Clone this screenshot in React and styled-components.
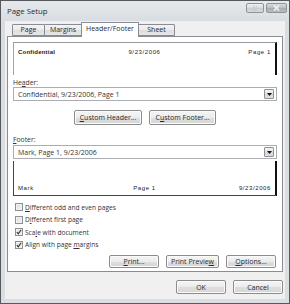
import React from 'react'
import styled, { createGlobalStyle } from 'styled-components'

const GlobalStyle = createGlobalStyle`
  html,
  body {
    margin: 0;
    padding: 0;
    background: #fff;
  }
  body {
    font-family: 'Open Sans', 'Noto Sans', 'Liberation Sans', sans-serif;
    font-size: 7px;
    color: #333;
  }
  * {
    box-sizing: border-box;
  }
`

const Window = styled.div`
  width: 290px;
  height: 304px;
  border: 1px solid #55585d;
  background: linear-gradient(#e6e9ec, #d9dde1 20px, #dadde1);
  display: flex;
  flex-direction: column;
  overflow: hidden;
`

const TitleBar = styled.div`
  height: 20px;
  flex: none;
  display: flex;
  justify-content: space-between;
  padding: 0 2px 0 6px;
`

const Title = styled.span`
  font-size: 7.8px;
  line-height: 10px;
  margin-top: 5px;
  color: #2b2b2b;
`

const Caption = styled.div`
  display: flex;
  gap: 2px;
  margin-top: 2px;
`

const CaptionButton = styled.div`
  width: ${props => props.w}px;
  height: 10px;
  border: 1px solid #8f9398;
  border-radius: 2px;
  background: ${props =>
    props.dark
      ? 'linear-gradient(#d9dcdf, #b9bdc2 50%, #a9adb3 51%, #b8bcc1)'
      : 'linear-gradient(#eef0f2, #d8dbde 50%, #cacdd2 51%, #d6d9dc)'};
  display: flex;
  align-items: center;
  justify-content: center;
  font-size: 7px;
  font-weight: bold;
  line-height: 1;
  color: #f4f4f4;
  text-shadow: 0 0 1px #555;
`

const Client = styled.div`
  flex: 1;
  margin: 0 4px 4px;
  padding: 0 2px;
  background: #f0f0f0;
  display: flex;
  flex-direction: column;
`

const TabStrip = styled.div`
  height: 15px;
  flex: none;
  display: flex;
  align-items: flex-end;
  padding-left: 5px;
`

const Tab = styled.div`
  width: ${props => props.w}px;
  height: ${props => (props.active ? 15 : 12)}px;
  margin-right: -1px;
  margin-bottom: ${props => (props.active ? -1 : 0)}px;
  position: relative;
  z-index: ${props => (props.active ? 1 : 0)};
  border: 1px solid #898c95;
  border-bottom: ${props => (props.active ? 'none' : '1px solid #898c95')};
  border-radius: 1px 1px 0 0;
  background: ${props =>
    props.active ? '#fff' : 'linear-gradient(#f3f3f3, #ebebeb 50%, #dedede 51%, #e6e6e6)'};
  font-size: 7px;
  line-height: ${props => (props.active ? 12 : 10)}px;
  text-align: center;
  color: #2a2a2a;
`

const Panel = styled.div`
  height: 236px;
  flex: none;
  border: 1px solid #898c95;
  background: #fff;
  padding: 5px 5px 0;
  display: flex;
  flex-direction: column;
`

const Preview = styled.div`
  height: ${props => props.h}px;
  flex: none;
  display: flex;
  justify-content: space-between;
  align-items: ${props => (props.footer ? 'flex-end' : 'flex-start')};
  padding: ${props => (props.footer ? '0 4px 3px 4px' : '6px 4px 0 4px')};
  border-left: 1px solid ${props => (props.footer ? '#444' : '#a3a3a3')};
  border-right: 2px solid #111;
  border-top: ${props => (props.footer ? 'none' : '1px solid #9a9a9a')};
  border-bottom: ${props => (props.footer ? '1px solid #444' : 'none')};
  margin-top: ${props => props.mt || 0}px;
  font-family: 'Liberation Sans', Arial, sans-serif;
  font-size: 6px;
  line-height: 7px;
  color: #222;
`

const PreviewText = styled.span`
  flex: 1;
  text-align: ${props => props.align};
  font-weight: ${props => (props.bold ? 'bold' : 'normal')};
  letter-spacing: ${props => (props.bold ? 0.2 : 0.6)}px;
`

const Label = styled.div`
  margin-top: ${props => props.mt}px;
  height: ${props => props.h}px;
  font-size: 6.8px;
  line-height: 9px;
`

const Select = styled.div`
  height: 14px;
  flex: none;
  border: 1px solid #abadb3;
  background: #fff;
  display: flex;
  align-items: center;
  justify-content: space-between;
  padding: 0 1px 0 4px;
  font-size: 7px;
`

const Arrow = styled.div`
  width: 10px;
  height: 10px;
  margin-right: 1px;
  border: 1px solid #8f9094;
  border-radius: 1px;
  background: linear-gradient(#f4f4f4, #e3e3e3 50%, #d6d6d6 51%, #e0e0e0);
  display: flex;
  align-items: center;
  justify-content: center;
`

const ButtonRow = styled.div`
  display: flex;
  gap: 7px;
  justify-content: ${props => props.justify || 'flex-end'};
  margin-top: ${props => props.mt}px;
  padding-right: ${props => props.pr || 0}px;
  flex: none;
`

const Button = styled.div`
  width: ${props => props.w}px;
  height: ${props => props.h || 14}px;
  border: 1px solid #8c8c8c;
  border-radius: 2px;
  background: linear-gradient(#f5f5f5, #ececec 50%, #dedede 51%, #d6d6d6);
  box-shadow: inset 0 0 0 1px #fbfbfb;
  display: flex;
  align-items: center;
  justify-content: center;
  font-size: 7px;
  color: #2a2a2a;
  white-space: nowrap;
`

const Checks = styled.div`
  margin-top: 5px;
  display: flex;
  flex-direction: column;
`

const CheckRow = styled.div`
  height: 12.5px;
  display: flex;
  align-items: center;
  padding-left: 2px;
  gap: 2px;
  font-size: 6.6px;
`

const Box = styled.div`
  width: 8px;
  height: 8px;
  flex: none;
  border: 1px solid #8e8f8f;
  background: linear-gradient(135deg, #dcdcdc, #f6f6f6);
  box-shadow: inset 0 0 0 1px #f2f2f2;
  display: flex;
  align-items: center;
  justify-content: center;
`

const Check = ({ checked, children }) => (
  <CheckRow>
    <Box>
      {checked && (
        <svg width="6" height="6" viewBox="0 0 6 6">
          <path d="M0.8 3.2 L2.3 4.8 L5.2 0.8" fill="none" stroke="#333" strokeWidth="1.1" />
        </svg>
      )}
    </Box>
    <span>{children}</span>
  </CheckRow>
)

const DownArrow = () => (
  <Arrow>
    <svg width="5" height="3" viewBox="0 0 5 3">
      <path d="M0 0 L5 0 L2.5 3 Z" fill="#111" />
    </svg>
  </Arrow>
)

export default function App() {
  return (
    <>
      <GlobalStyle />
      <Window>
        <TitleBar>
          <Title>Page Setup</Title>
          <Caption>
            <CaptionButton w={18}>?</CaptionButton>
            <CaptionButton w={21} dark>
              <svg width="7" height="6" viewBox="0 0 7 6">
                <path d="M1 0.5 L6 5.5 M6 0.5 L1 5.5" stroke="#f4f4f4" strokeWidth="1.5" />
              </svg>
            </CaptionButton>
          </Caption>
        </TitleBar>
        <Client>
          <TabStrip>
            <Tab w={33}>Page</Tab>
            <Tab w={38}>Margins</Tab>
            <Tab w={58} active>
              Header/Footer
            </Tab>
            <Tab w={37}>Sheet</Tab>
          </TabStrip>
          <Panel>
            <Preview h={33}>
              <PreviewText align="left" bold>
                Confidential
              </PreviewText>
              <PreviewText align="center">9/23/2006</PreviewText>
              <PreviewText align="right">Page 1</PreviewText>
            </Preview>
            <Label mt={3} h={9}>
              He<u>a</u>der:
            </Label>
            <Select>
              <span>Confidential, 9/23/2006, Page 1</span>
              <DownArrow />
            </Select>
            <ButtonRow justify="center" mt={9}>
              <Button w={68} h={15}>
                <u>C</u>ustom Header...
              </Button>
              <Button w={67} h={15}>
                C<u>u</u>stom Footer...
              </Button>
            </ButtonRow>
            <Label mt={10} h={10}>
              <u>F</u>ooter:
            </Label>
            <Select>
              <span>Mark, Page 1, 9/23/2006</span>
              <DownArrow />
            </Select>
            <Preview h={35} mt={2} footer>
              <PreviewText align="left">Mark</PreviewText>
              <PreviewText align="center">Page 1</PreviewText>
              <PreviewText align="right">9/23/2006</PreviewText>
            </Preview>
            <Checks>
              <Check>
                <u>D</u>ifferent odd and even pages
              </Check>
              <Check>
                D<u>i</u>fferent first page
              </Check>
              <Check checked>
                Sca<u>l</u>e with document
              </Check>
              <Check checked>
                Align with page <u>m</u>argins
              </Check>
            </Checks>
            <ButtonRow mt={4} pr={1}>
              <Button w={50} h={13}>
                <u>P</u>rint...
              </Button>
              <Button w={53} h={13}>
                Print Previe<u>w</u>
              </Button>
              <Button w={50} h={13}>
                <u>O</u>ptions...
              </Button>
            </ButtonRow>
          </Panel>
          <ButtonRow mt={8}>
            <Button w={50}>OK</Button>
            <Button w={50}>Cancel</Button>
          </ButtonRow>
        </Client>
      </Window>
    </>
  )
}
